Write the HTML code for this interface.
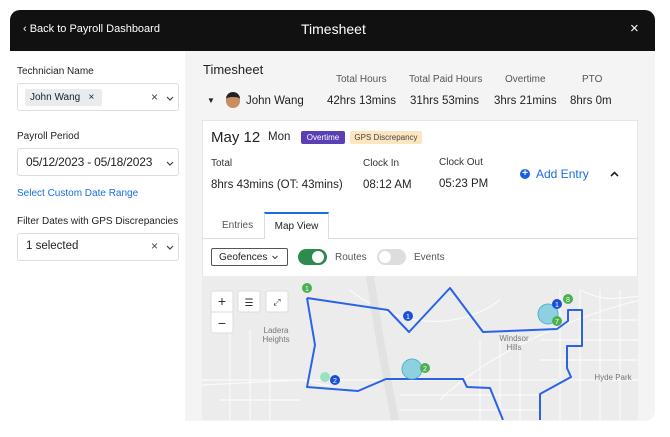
<!DOCTYPE html>
<html><head><style>
*{box-sizing:border-box;margin:0;padding:0}
body{width:670px;height:437px;background:#fff;font-family:"Liberation Sans",sans-serif;position:relative;overflow:hidden;color:#222}
.a{position:absolute}
.hdr{left:10px;top:10px;width:645px;height:41px;background:#111;border-radius:10px 10px 0 0;color:#fff}
.lbl{font-size:10px;color:#222}
.box{border:1px solid #ddd;border-radius:3px;background:#fff}
.gray{left:185px;top:51px;width:470px;height:370px;background:#f4f4f4;border-radius:0 0 10px 0}
.sm{font-size:10px;color:#555}
.b{font-size:11.5px;color:#222}
.chev{position:absolute;width:8px;height:5px}
</style></head><body>
<div class="a hdr">
 <div class="a" style="left:13px;top:13px;font-size:11px">&#8249; Back to Payroll Dashboard</div>
 <div class="a" style="left:291px;top:11px;font-size:14px">Timesheet</div>
 <div class="a" style="left:620px;top:10px;font-size:15px">×</div>
</div>
<div class="a" style="left:10px;top:51px;width:175px;height:370px;background:#fff"></div>
<div class="a lbl" style="left:17px;top:66px">Technician Name</div>
<div class="a box" style="left:17px;top:83px;width:162px;height:28px">
 <div class="a" style="left:7px;top:5px;width:77px;height:17px;background:#e8ecef;border-radius:2px;font-size:10px;padding:3px 5px">John Wang &nbsp;&nbsp;×</div>
 <div class="a" style="left:133px;top:6px;font-size:12px;color:#444">×</div>
 <svg class="chev" style="left:148px;top:12px" viewBox="0 0 8 5"><path d="M1 1 L4 4 L7 1" stroke="#444" fill="none" stroke-width="1.2"/></svg>
</div>
<div class="a lbl" style="left:17px;top:131px">Payroll Period</div>
<div class="a box" style="left:17px;top:148px;width:162px;height:28px">
 <div class="a" style="left:8px;top:6px;font-size:12px;letter-spacing:-0.2px">05/12/2023 - 05/18/2023</div>
 <svg class="chev" style="left:148px;top:12px" viewBox="0 0 8 5"><path d="M1 1 L4 4 L7 1" stroke="#444" fill="none" stroke-width="1.2"/></svg>
</div>
<div class="a" style="left:17px;top:188px;font-size:10px;color:#1a6de0">Select Custom Date Range</div>
<div class="a lbl" style="left:17px;top:216px">Filter Dates with GPS Discrepancies</div>
<div class="a box" style="left:17px;top:233px;width:162px;height:28px">
 <div class="a" style="left:8px;top:6px;font-size:11.5px">1 selected</div>
 <div class="a" style="left:133px;top:5px;font-size:12px;color:#444">×</div>
 <svg class="chev" style="left:148px;top:11px" viewBox="0 0 8 5"><path d="M1 1 L4 4 L7 1" stroke="#444" fill="none" stroke-width="1.2"/></svg>
</div>
<div class="a gray"></div>
<div class="a" style="left:203px;top:62px;font-size:13px">Timesheet</div>
<div class="a sm" style="left:336px;top:74px">Total Hours</div>
<div class="a sm" style="left:409px;top:74px">Total Paid Hours</div>
<div class="a sm" style="left:505px;top:74px">Overtime</div>
<div class="a sm" style="left:582px;top:74px">PTO</div>
<div class="a" style="left:207px;top:96px;font-size:8px">▼</div>
<div class="a" style="left:226px;top:92px;width:14px;height:16px;border-radius:7px;background:#c98d63;border-top:5px solid #222"></div>
<div class="a b" style="left:246px;top:95px">John Wang</div>
<div class="a b" style="left:327px;top:95px">42hrs 13mins</div>
<div class="a b" style="left:410px;top:95px">31hrs 53mins</div>
<div class="a b" style="left:494px;top:95px">3hrs 21mins</div>
<div class="a b" style="left:570px;top:95px">8hrs 0m</div>
<div class="a" style="left:202px;top:120px;width:436px;height:300px;background:#fff;border:1px solid #e6e6e6"></div>
<div class="a" style="left:211px;top:129px;font-size:15px">May 12</div>
<div class="a" style="left:268px;top:131px;font-size:11.5px">Mon</div>
<div class="a" style="left:301px;top:131px;width:44px;height:13px;background:#5a3fb5;color:#fff;font-size:8px;text-align:center;line-height:13px;border-radius:2px">Overtime</div>
<div class="a" style="left:350px;top:131px;width:72px;height:13px;background:#fde5c0;color:#444;font-size:8px;text-align:center;line-height:13px;border-radius:2px">GPS Discrepancy</div>
<div class="a sm" style="left:211px;top:158px;color:#333">Total</div>
<div class="a sm" style="left:363px;top:158px;color:#333">Clock In</div>
<div class="a sm" style="left:439px;top:157px;color:#333">Clock Out</div>
<div class="a b" style="left:211px;top:179px">8hrs 43mins (OT: 43mins)</div>
<div class="a b" style="left:363px;top:179px">08:12 AM</div>
<div class="a b" style="left:439px;top:178px">05:23 PM</div>
<div class="a" style="left:520px;top:169px;width:10px;height:10px;border-radius:5px;background:#1a5fe0;color:#fff;font-size:10px;line-height:10px;text-align:center;font-weight:bold">+</div>
<div class="a" style="left:536px;top:167px;font-size:12px;color:#1a6de0">Add Entry</div>
<svg class="a" style="left:610px;top:171px" width="9" height="6" viewBox="0 0 9 6"><path d="M1 5 L4.5 1.5 L8 5" stroke="#222" fill="none" stroke-width="1.6"/></svg>
<div class="a" style="left:203px;top:238px;width:434px;height:1px;background:#ddd"></div>
<div class="a sm" style="left:222px;top:220px">Entries</div>
<div class="a" style="left:264px;top:212px;width:65px;height:27px;background:#fff;border:1px solid #ddd;border-top:2px solid #1a6de0;border-bottom:none;font-size:10px;text-align:center;padding-top:7px">Map View</div>
<div class="a" style="left:211px;top:248px;width:77px;height:18px;border:1px solid #555;border-radius:2px;font-size:10px;padding:3px 7px">Geofences</div>
<svg class="chev" style="left:271px;top:255px" viewBox="0 0 8 5"><path d="M1.5 1 L4 3.5 L6.5 1" stroke="#444" fill="none" stroke-width="1.1"/></svg>
<div class="a" style="left:298px;top:249px;width:29px;height:16px;border-radius:8px;background:#2e8b4e"><div class="a" style="left:14px;top:2px;width:12px;height:12px;border-radius:6px;background:#fff"></div></div>
<div class="a sm" style="left:335px;top:252px">Routes</div>
<div class="a" style="left:377px;top:249px;width:29px;height:16px;border-radius:8px;background:#ddd"><div class="a" style="left:2px;top:2px;width:12px;height:12px;border-radius:6px;background:#fff"></div></div>
<div class="a sm" style="left:414px;top:252px">Events</div>
<svg class="a" style="left:202px;top:276px" width="436" height="144" viewBox="202 276 436 144">
<rect x="202" y="276" width="436" height="144" fill="#ececec"/>
<g stroke="#fafafa" stroke-width="1.2" fill="none">
<path d="M202 385 L300 380 L330 386 M202 380 L640 380 M350 290 C400 330 460 330 500 300 M440 400 C480 360 560 320 640 300 M560 290 V420 M580 290 V420 M600 290 V420 M620 290 V420 M540 340 H640 M540 360 H640 M220 400 H300 M230 330 V420 M250 330 V420 M270 330 V420 M480 340 V420 M500 340 V420 M520 340 V420 M400 395 H540 M400 410 H540 M590 320 H640 M580 290 C600 300 610 300 640 296"/>
</g>
<path d="M370 276 L380 340 L395 420" stroke="#e0e3e0" stroke-width="8" fill="none"/>
<g stroke="#2a62e8" stroke-width="2" fill="none" stroke-linejoin="round">
<path d="M307 298 L388 310 L409 332 L450 288 L483 332 L557 329 L568 321 L568 310 L582 310 L582 346 L567 346 L567 368 L571 377 L540 394 L540 420"/>
<path d="M307 298 L315 345 L307 387 L358 391 L386 379 L463 379 L467 387 L490 388 L503 420"/>
</g>
<circle cx="412" cy="369" r="10" fill="#8fd0e0" stroke="#4bb5d0"/>
<circle cx="548" cy="314" r="10" fill="#8fd0e0" stroke="#4bb5d0"/>
<g font-size="7" fill="#fff" text-anchor="middle" font-family="Liberation Sans">
<circle cx="307" cy="288" r="5" fill="#4caf50"/><text x="307" y="291">1</text>
<circle cx="408" cy="316" r="5" fill="#1a4fd8"/><text x="408" y="319">1</text>
<circle cx="425" cy="368" r="5" fill="#4caf50"/><text x="425" y="371">2</text>
<circle cx="335" cy="380" r="5" fill="#1a4fd8"/><text x="335" y="383">2</text>
<circle cx="325" cy="377" r="5" fill="#9be3c0"/>
<circle cx="557" cy="304" r="5" fill="#1a4fd8"/><text x="557" y="307">1</text>
<circle cx="568" cy="299" r="5" fill="#4caf50"/><text x="568" y="302">8</text>
<circle cx="557" cy="321" r="5" fill="#4caf50"/><text x="557" y="324">7</text>
</g>
<g fill="#fff" stroke="#ddd">
<rect x="211" y="291" width="22" height="21" rx="2"/><rect x="211" y="312" width="22" height="21" rx="2"/>
<rect x="238" y="291" width="22" height="21" rx="2"/><rect x="266" y="291" width="22" height="21" rx="2"/>
</g>
<g font-size="14" fill="#333" font-family="Liberation Sans" text-anchor="middle">
<text x="222" y="306">+</text><text x="222" y="328">−</text>
<text x="249" y="306" font-size="10">☰</text><text x="277" y="305" font-size="9">⤢</text>
</g>
<g font-size="8" fill="#777" font-family="Liberation Sans" text-anchor="middle">
<text x="276" y="333">Ladera</text><text x="276" y="342">Heights</text>
<text x="514" y="341">Windsor</text><text x="514" y="350">Hills</text>
<text x="613" y="380">Hyde Park</text>
</g>
</svg>
</body></html>
